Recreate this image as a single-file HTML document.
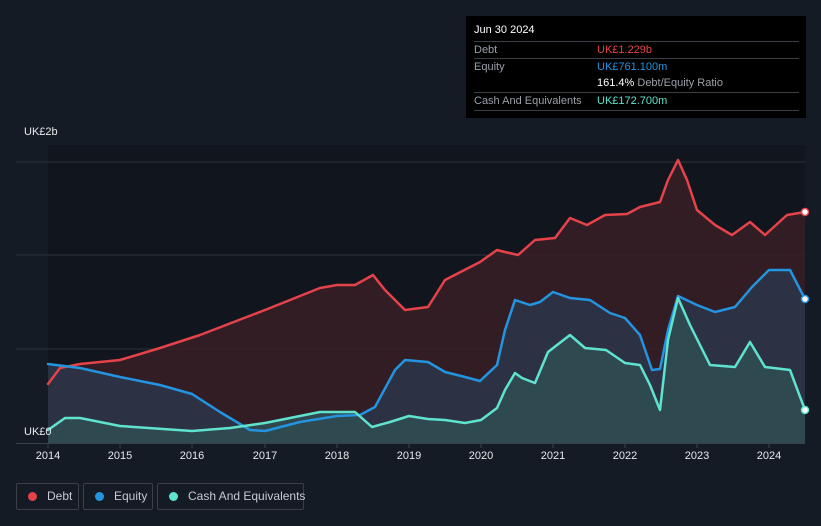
<!DOCTYPE html>
<html><head><meta charset="utf-8"><style>
body{margin:0;width:821px;height:526px;background:#151b25;font-family:"Liberation Sans",sans-serif;overflow:hidden;position:relative}
.tt{position:absolute;left:466px;top:16px;width:340px;height:102px;background:#000;color:#fff;font-size:11px}
.tt .r{position:absolute;left:8px;width:325px;border-top:1px solid #3a3f46;height:16px;line-height:16px}
.lab{color:#9aa0a8}
.v{position:absolute;left:123px}
.leg{position:absolute;top:483px;height:27px;border:1px solid #3a3f48;border-radius:2px;color:#c6cad0;font-size:12px;line-height:25px;box-sizing:border-box;white-space:nowrap}
.dot{display:inline-block;width:9px;height:9px;border-radius:50%;margin:0 10px 0 11px;vertical-align:-1px}
.ax{position:absolute;top:450px;color:#e6e8eb;font-size:11px;width:40px;text-align:center}
</style></head><body>
<svg width="821" height="526" style="position:absolute;left:0;top:0">
<rect x="48" y="145" width="757" height="298" fill="#11161e"/>
<g stroke="#2b313b" stroke-width="1"><line x1="16" y1="162" x2="805" y2="162"/><line x1="16" y1="255" x2="805" y2="255"/><line x1="16" y1="349" x2="805" y2="349"/></g>
<path d="M48,384 L60,368 80,364 120,360 160,348 200,335 265,310 320,288 337,285 355,285 373,275 385,290 405,310 428,307 445,280 480,262 497,250 505,252 518,255 535,240 555,238 570,218 587,225 605,215 627,214 640,207 660,202 668,180 678,160 687,180 697,210 715,225 732,235 750,222 765,235 787,215 805,212 L805,443 48,443Z" fill="#3a1e26" fill-opacity="0.85"/>
<path d="M48,364 L80,368 120,377 160,385 192,394 220,412 250,430 265,431 300,422 337,416 360,415 375,407 395,370 405,360 428,362 445,372 465,377 480,381 497,365 505,330 515,300 530,305 540,302 553,292 570,298 590,300 610,313 625,318 640,335 652,370 660,369 668,330 678,296 697,305 715,312 735,307 752,287 769,270 790,270 805,299 L805,443 48,443Z" fill="#2c3448" fill-opacity="0.9"/>
<path d="M48,430 L65,418 80,418 120,426 192,431 230,428 265,423 300,416 320,412 355,412 372,427 390,422 409,416 428,419 445,420 465,423 481,420 497,408 505,390 515,373 522,378 535,383 548,352 570,335 585,348 606,350 625,363 640,365 650,385 660,410 668,340 678,298 690,325 710,365 735,367 750,342 765,367 790,370 805,410 L805,443 48,443Z" fill="#2f4d52" fill-opacity="0.9"/>
<g fill="none" stroke-width="2.5" stroke-linejoin="round" stroke-linecap="round">
<polyline stroke="#e5424a" points="48,384 60,368 80,364 120,360 160,348 200,335 265,310 320,288 337,285 355,285 373,275 385,290 405,310 428,307 445,280 480,262 497,250 505,252 518,255 535,240 555,238 570,218 587,225 605,215 627,214 640,207 660,202 668,180 678,160 687,180 697,210 715,225 732,235 750,222 765,235 787,215 805,212"/>
<polyline stroke="#2394e0" points="48,364 80,368 120,377 160,385 192,394 220,412 250,430 265,431 300,422 337,416 360,415 375,407 395,370 405,360 428,362 445,372 465,377 480,381 497,365 505,330 515,300 530,305 540,302 553,292 570,298 590,300 610,313 625,318 640,335 652,370 660,369 668,330 678,296 697,305 715,312 735,307 752,287 769,270 790,270 805,299"/>
<polyline stroke="#5fe3cf" points="48,430 65,418 80,418 120,426 192,431 230,428 265,423 300,416 320,412 355,412 372,427 390,422 409,416 428,419 445,420 465,423 481,420 497,408 505,390 515,373 522,378 535,383 548,352 570,335 585,348 606,350 625,363 640,365 650,385 660,410 668,340 678,298 690,325 710,365 735,367 750,342 765,367 790,370 805,410"/>
</g>
<circle cx="805" cy="212" r="3.5" fill="#fff" stroke="#e5424a" stroke-width="1.5"/>
<circle cx="805" cy="299" r="3.5" fill="#fff" stroke="#2394e0" stroke-width="1.5"/>
<circle cx="805" cy="410" r="3.5" fill="#fff" stroke="#5fe3cf" stroke-width="1.5"/>
<line x1="16" y1="443.5" x2="805" y2="443.5" stroke="#3a404a"/>
<g stroke="#3a404a"><line x1="48" y1="443" x2="48" y2="448"/><line x1="120" y1="443" x2="120" y2="448"/><line x1="192" y1="443" x2="192" y2="448"/><line x1="265" y1="443" x2="265" y2="448"/><line x1="337" y1="443" x2="337" y2="448"/><line x1="409" y1="443" x2="409" y2="448"/><line x1="481" y1="443" x2="481" y2="448"/><line x1="553" y1="443" x2="553" y2="448"/><line x1="625" y1="443" x2="625" y2="448"/><line x1="697" y1="443" x2="697" y2="448"/><line x1="769" y1="443" x2="769" y2="448"/></g>
<text x="24" y="135" fill="#e6e8eb" font-size="11" font-family="Liberation Sans">UK£2b</text>
<text x="24" y="435" fill="#e6e8eb" font-size="11" font-family="Liberation Sans">UK£0</text>
</svg>
<div class="ax" style="left:28px">2014</div><div class="ax" style="left:100px">2015</div><div class="ax" style="left:172px">2016</div><div class="ax" style="left:245px">2017</div><div class="ax" style="left:317px">2018</div><div class="ax" style="left:389px">2019</div><div class="ax" style="left:461px">2020</div><div class="ax" style="left:533px">2021</div><div class="ax" style="left:605px">2022</div><div class="ax" style="left:677px">2023</div><div class="ax" style="left:749px">2024</div>
<div class="tt">
<div style="position:absolute;left:8px;top:8px">Jun 30 2024</div>
<div class="r" style="top:25px"><span class="lab">Debt</span><span class="v" style="color:#e5424a">UK£1.229b</span></div>
<div class="r" style="top:42px"><span class="lab">Equity</span><span class="v" style="color:#2394e0">UK£761.100m</span></div>
<div class="r" style="top:59px;border-top:none"><span class="v"><b style="font-weight:normal;color:#fff">161.4%</b> <span class="lab">Debt/Equity Ratio</span></span></div>
<div class="r" style="top:76px"><span class="lab">Cash And Equivalents</span><span class="v" style="color:#5fe3cf">UK£172.700m</span></div>
<div class="r" style="top:94px;height:0"></div>
</div>
<div class="leg" style="left:16px;width:63px"><span class="dot" style="background:#e5424a"></span>Debt</div>
<div class="leg" style="left:83px;width:70px"><span class="dot" style="background:#2394e0"></span>Equity</div>
<div class="leg" style="left:157px;width:147px"><span class="dot" style="background:#5fe3cf"></span>Cash And Equivalents</div>
</body></html>
